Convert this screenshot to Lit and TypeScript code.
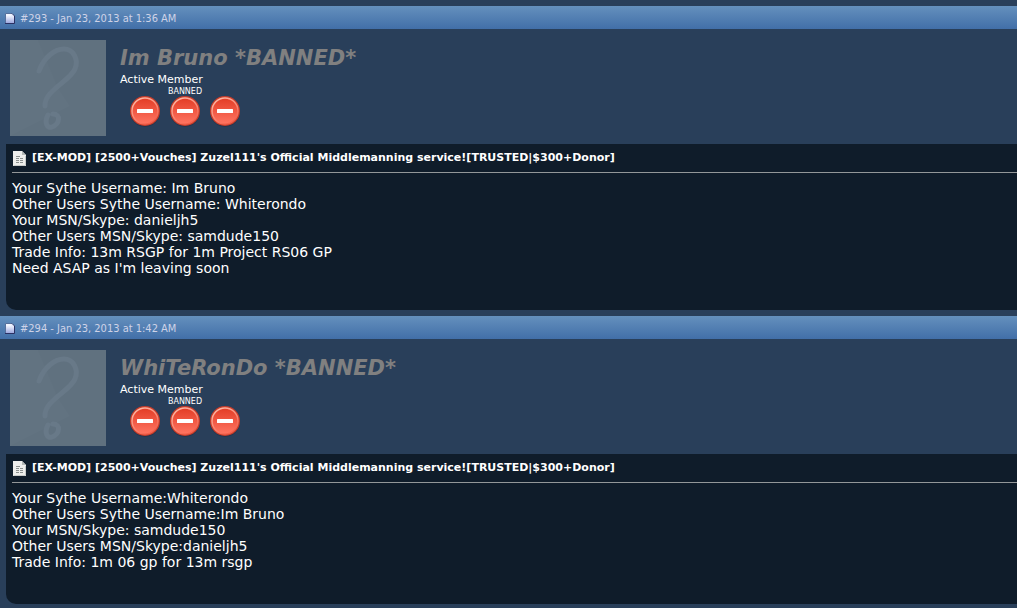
import { LitElement, html, css, svg } from "lit";
import { customElement, property } from "lit/decorators.js";

interface Post {
  number: number;
  date: string;
  author: string;
  rank: string;
  title: string;
  lines: string[];
}

const THREAD = "[EX-MOD] [2500+Vouches] Zuzel111's Official Middlemanning service![TRUSTED|$300+Donor]";

const POSTS: Post[] = [
  {
    number: 293,
    date: "Jan 23, 2013 at 1:36 AM",
    author: "Im Bruno *BANNED*",
    rank: "Active Member",
    title: THREAD,
    lines: [
      "Your Sythe Username: Im Bruno",
      "Other Users Sythe Username: Whiterondo",
      "Your MSN/Skype: danieljh5",
      "Other Users MSN/Skype: samdude150",
      "Trade Info: 13m RSGP for 1m Project RS06 GP",
      "Need ASAP as I'm leaving soon",
    ],
  },
  {
    number: 294,
    date: "Jan 23, 2013 at 1:42 AM",
    author: "WhiTeRonDo *BANNED*",
    rank: "Active Member",
    title: THREAD,
    lines: [
      "Your Sythe Username:Whiterondo",
      "Other Users Sythe Username:Im Bruno",
      "Your MSN/Skype: samdude150",
      "Other Users MSN/Skype:danieljh5",
      "Trade Info: 1m 06 gp for 13m rsgp",
    ],
  },
];

const pageIcon = html`<svg width="10" height="11" viewBox="0 0 10 11" aria-hidden="true">
  <defs>
    <linearGradient id="sheet" x1="0" y1="0" x2="0" y2="1">
      <stop offset="0.2" stop-color="#f2f5ff" />
      <stop offset="1" stop-color="#98a3dc" />
    </linearGradient>
  </defs>
  <path d="M.5 .5H7L9.500 3V10.500H.5Z" fill="url(#sheet)" />
  <path d="M.5 10V.5H7" fill="none" stroke="#56709c" />
  <path d="M7 .5L9.500 3V10.500H0" fill="none" stroke="#2b3163" />
  <path d="M6.500 1V3.500H9" fill="#dfe6fa" />
</svg>`;

const documentIcon = html`<svg width="13" height="15" viewBox="0 0 13 15" aria-hidden="true">
  <path d="M0 0H9L13 4V15H0Z" fill="#eeeeec" />
  <path d="M9 0V4H13Z" fill="#b4b8b6" />
  <path d="M3 5.500H7" stroke="#8b908f" />
  <path d="M3 7.500H10M3 9.500H10M3 11.500H10" stroke="#8b908f" stroke-dasharray="3 1" />
  <path d="M.5 14.500H12.500V5" fill="none" stroke="#c9ccca" />
</svg>`;

const noEntry = (x: number) => svg`<g transform="translate(${x} 0)">
  <circle cx="15" cy="16" r="15" fill="#14263b" opacity="0.35" />
  <circle cx="15" cy="15" r="15" fill="#c93c29" />
  <circle cx="15" cy="15" r="13" fill="url(#red)" stroke="url(#rim)" stroke-width="1.500" />
  <rect x="7" y="13" width="16" height="4" rx="0.500" fill="#fff" />
</g>`;

@customElement("forum-post")
export class ForumPost extends LitElement {
  @property({ attribute: false }) post!: Post;

  static styles = css`
    :host {
      display: block;
      padding-top: 6px;
    }
    svg {
      display: block;
      flex: none;
    }
    .bar {
      display: flex;
      align-items: center;
      gap: 5px;
      height: 21px;
      padding: 2px 5px 0;
      background: linear-gradient(#6490bd, #426fa8);
      color: #ced3e8;
      font: 11px/16px "DejaVu Sans Condensed", "DejaVu Sans", Tahoma, sans-serif;
    }
    .link {
      color: inherit;
      text-decoration: none;
    }
    .member {
      display: flex;
      gap: 14px;
      padding: 11px 10px 8px;
    }
    .name {
      display: block;
      margin: 5px 0 0;
      color: #808080;
      font-size: 21px;
      font-weight: bold;
      font-style: italic;
      line-height: 26px;
    }
    .rank {
      padding-top: 1px;
      font-size: 11px;
      line-height: 15px;
    }
    .badges {
      width: 130px;
    }
    .caption {
      font-size: 8px;
      line-height: 9px;
      text-align: center;
    }
    .signs {
      margin-left: 10px;
    }
    .content {
      margin-left: 6px;
      padding: 0 0 34px 6px;
      border-bottom-left-radius: 10px;
      background: #0f1c2a;
    }
    .subject {
      display: flex;
      align-items: center;
      gap: 6px;
      margin: 0;
      padding: 6px 1px;
      border-bottom: 1px solid #939799;
      font-size: 11px;
      font-weight: bold;
      line-height: 16px;
    }
    .text {
      margin: 0;
      padding-top: 7px;
      font-size: 14px;
      line-height: 16px;
      white-space: pre-line;
    }
  `;

  render() {
    const p = this.post;
    return html`
      <div class="bar">
        ${pageIcon}
        <a class="link" href="#post${p.number}">#${p.number} - ${p.date}</a>
      </div>
      <div class="member">
        <svg width="96" height="96" viewBox="0 0 96 96" role="img" aria-label="No avatar">
          <rect width="96" height="96" fill="#60717f" />
          <path d="M0 0H28L48 48L60 66L0 96Z" fill="#627381" />
          <path
            d="M29 31C34 17 45 9 54 9C63 9 69 19 65 29C60 41 34 51 35 66"
            fill="none"
            stroke="#687988"
            stroke-width="5"
            stroke-linecap="round"
            stroke-linejoin="round"
          />
          <path
            d="M38 75C34 82 37 89 42 87C50 84 51 74 43 74"
            fill="none"
            stroke="#687988"
            stroke-width="5"
            stroke-linecap="round"
          />
        </svg>
        <div>
          <a class="link name" href="#${p.author}">${p.author}</a>
          <div class="rank">${p.rank}</div>
          <div class="badges">
            <div class="caption">BANNED</div>
            <svg class="signs" width="110" height="31" viewBox="0 0 110 31" aria-hidden="true">
              <defs>
                <linearGradient id="red" x1="0" y1="0" x2="0" y2="1">
                  <stop offset="0" stop-color="#e33c25" />
                  <stop offset="1" stop-color="#ff7562" />
                </linearGradient>
                <linearGradient id="rim" x1="0" y1="0" x2="0.600" y2="1">
                  <stop offset="0" stop-color="#ffc5b2" />
                  <stop offset="1" stop-color="#f4614c" />
                </linearGradient>
              </defs>
              ${[0, 40, 80].map(noEntry)}
            </svg>
          </div>
        </div>
      </div>
      <div class="content">
        <h2 class="subject">${documentIcon}<span>${p.title}</span></h2>
        <p class="text">${p.lines.join("\n")}</p>
      </div>
    `;
  }
}

@customElement("app-root")
export class AppRoot extends LitElement {
  static styles = css`
    :host {
      display: block;
      min-height: 100vh;
      background: #293f5a;
      color: #fff;
      font-family: Verdana, "DejaVu Sans", sans-serif;
      font-size: 13px;
    }
  `;

  render() {
    return POSTS.map((post) => html`<forum-post .post=${post}></forum-post>`);
  }
}
